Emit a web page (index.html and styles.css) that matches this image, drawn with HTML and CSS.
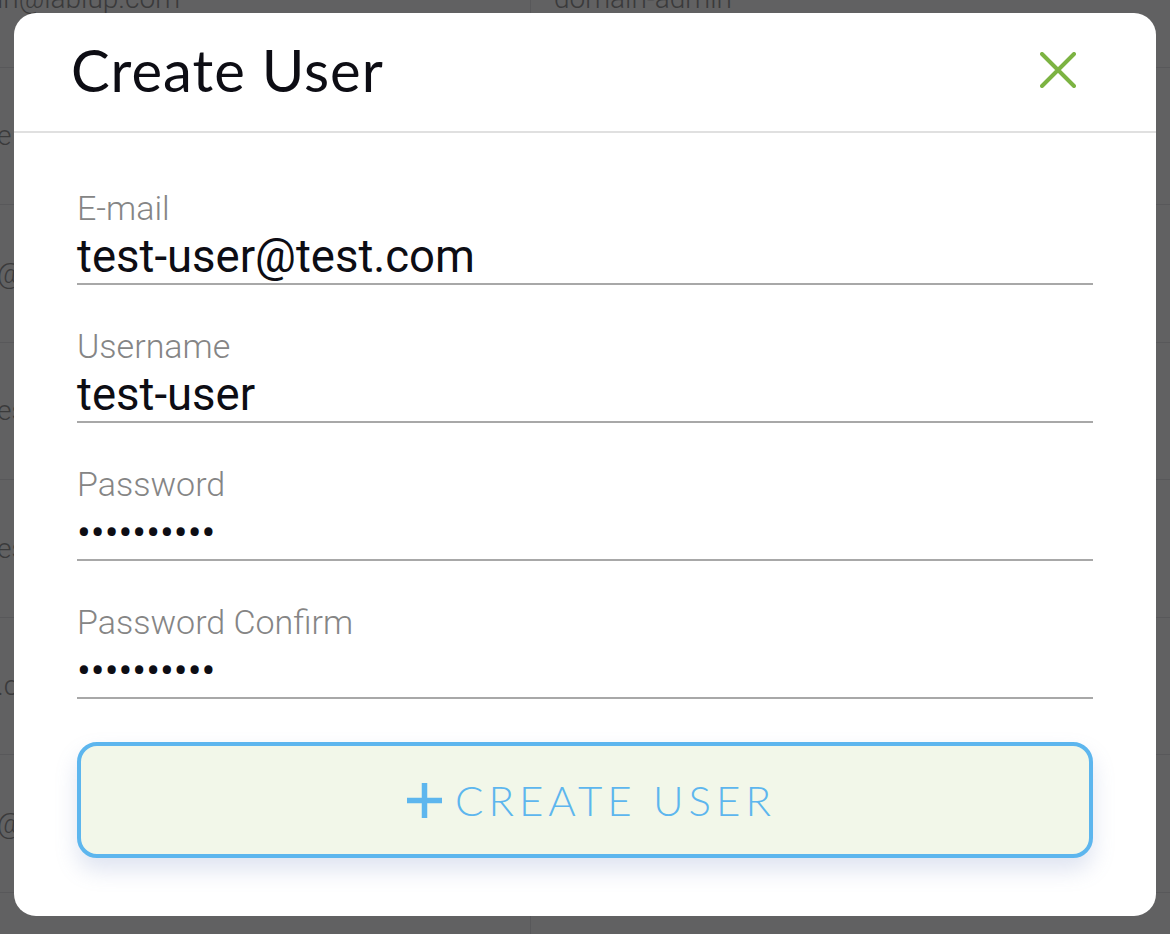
FILE: index.html
```html
<!DOCTYPE html>
<html lang="en">
<head>
<meta charset="utf-8">
<title>Create User</title>
<link rel="stylesheet" href="styles.css">
</head>
<body>
<div class="stage">
  <div class="backdrop">
    <div class="row"><div class="cell c1">in@lablup.com</div><div class="cell c2">domain-admin</div></div>
    <div class="row"><div class="cell c1">e</div><div class="cell c2"></div></div>
    <div class="row"><div class="cell c1">@t</div><div class="cell c2"></div></div>
    <div class="row"><div class="cell c1">es</div><div class="cell c2"></div></div>
    <div class="row"><div class="cell c1">es</div><div class="cell c2"></div></div>
    <div class="row"><div class="cell c1">.c</div><div class="cell c2"></div></div>
    <div class="row"><div class="cell c1">@t</div><div class="cell c2"></div></div>
    <div class="row"><div class="cell c1"></div><div class="cell c2"></div></div>
  </div>
  <div class="modal-layer">
    <div class="modal">
      <div class="modal-header">
        <h2 class="title">Create User</h2>
        <button class="close" aria-label="Close">
          <svg width="36" height="36" viewBox="0 0 36 36"><path d="M2 2 L34 34 M34 2 L2 34" stroke="#7cb342" stroke-width="4" stroke-linecap="round" fill="none"/></svg>
        </button>
      </div>
      <div class="modal-body">
        <div class="field">
          <div class="label">E-mail</div>
          <div class="value">test-user@test.com</div>
        </div>
        <div class="field">
          <div class="label">Username</div>
          <div class="value">test-user</div>
        </div>
        <div class="field">
          <div class="label">Password</div>
          <div class="value dots">••••••••••</div>
        </div>
        <div class="field">
          <div class="label">Password Confirm</div>
          <div class="value dots">••••••••••</div>
        </div>
        <button class="create">
          <svg class="plus" width="37" height="37" viewBox="0 0 37 37"><path d="M18.5 1 V36 M1 18.5 H36" stroke="#5db6ee" stroke-width="5.5" fill="none"/></svg>
          <span class="create-text">CREATE USER</span>
        </button>
      </div>
    </div>
  </div>
</div>
</body>
</html>
```

FILE: styles.css
```css
html, body {
  margin: 0;
  padding: 0;
}
body {
  width: 1170px;
  height: 934px;
  overflow: hidden;
  background: #616162;
  font-family: Roboto, "Liberation Sans", sans-serif;
}
.stage {
  display: grid;
  grid-template-rows: 934px;
  grid-template-columns: 1170px;
  width: 1170px;
  height: 934px;
  overflow: hidden;
}
.backdrop, .modal-layer {
  grid-area: 1 / 1;
}
.backdrop {
  display: flex;
  flex-direction: column;
  margin-top: -70px;
  overflow: hidden;
}
.row {
  display: flex;
  height: 137.5px;
  flex: none;
  border-bottom: 1px solid #58585a;
  box-sizing: border-box;
}
.cell {
  display: flex;
  align-items: center;
  font-size: 28px;
  font-weight: 300;
  color: #3a3a3b;
  box-sizing: border-box;
  white-space: nowrap;
}
.c1 {
  width: 534px;
  border-right: 1px solid #58585a;
  margin-left: -3px;
}
.c2 {
  flex: 1;
  padding-left: 23px;
}
.modal-layer {
  padding: 13px 14px 18px 14px;
  display: flex;
  box-sizing: border-box;
  height: 934px;
}
.modal {
  flex: 1;
  background: #fff;
  border-radius: 22px;
  display: flex;
  flex-direction: column;
}
.modal-header {
  height: 118px;
  border-bottom: 2px solid #e0e0e0;
  display: flex;
  align-items: center;
  justify-content: space-between;
  padding: 0 80px 0 57px;
}
.title {
  margin: 0 0 6px 0;
  font-family: Lato, "Open Sans", sans-serif;
  font-weight: 400;
  font-size: 58px;
  color: #0d0d14;
  letter-spacing: 1px;
}
.close {
  border: 0;
  background: none;
  padding: 0;
  width: 36px;
  height: 36px;
  display: flex;
  margin-bottom: 4px;
}
.modal-body {
  padding: 55px 63px 0 63px;
  display: flex;
  flex-direction: column;
}
.field {
  display: flex;
  flex-direction: column;
  gap: 3px;
  border-bottom: 2px solid #a8a8a8;
  margin-bottom: 41px;
}
.label {
  font-size: 34px;
  font-weight: 300;
  line-height: 40px;
  color: #858585;
}
.value {
  font-size: 45.5px;
  font-weight: 400;
  line-height: 52px;
  color: #0d0d14;
}
.dots {
  font-size: 41px;
}
.create {
  margin-top: 2px;
  height: 116px;
  border: 4px solid #5db6ee;
  border-radius: 20px;
  background: #f2f7e9;
  box-shadow: 0 12px 22px rgba(110, 130, 190, 0.22);
  display: flex;
  align-items: center;
  justify-content: center;
  gap: 12px;
  padding: 0 0 0 12px;
  box-sizing: border-box;
  color: #5db6ee;
}
.create-text {
  font-family: Lato, "Open Sans", sans-serif;
  font-weight: 300;
  font-size: 42px;
  letter-spacing: 5px;
}
```
